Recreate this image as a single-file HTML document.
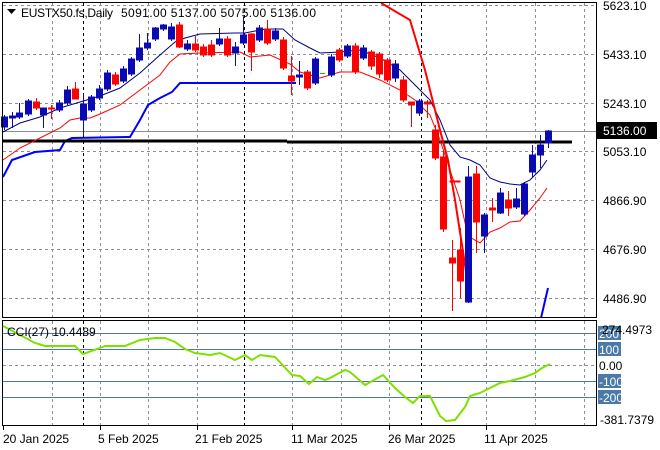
<!DOCTYPE html>
<html><head><meta charset="utf-8"><style>
html,body{margin:0;padding:0;background:#fff;}
svg{display:block;font-family:"Liberation Sans",sans-serif;}
</style></head><body>
<svg width="660" height="450" viewBox="0 0 660 450" xmlns="http://www.w3.org/2000/svg">
<rect width="660" height="450" fill="#fff"/>
<g stroke="#8a9099" stroke-dasharray="3,3" stroke-width="1">
<line x1="3" y1="5.5" x2="596" y2="5.5"/><line x1="3" y1="54.5" x2="596" y2="54.5"/><line x1="3" y1="103.5" x2="596" y2="103.5"/><line x1="3" y1="151.5" x2="596" y2="151.5"/><line x1="3" y1="200.5" x2="596" y2="200.5"/><line x1="3" y1="249.5" x2="596" y2="249.5"/><line x1="3" y1="298.5" x2="596" y2="298.5"/>
<line x1="3" y1="365.5" x2="596" y2="365.5"/>
</g>
<g stroke="#8a9099" stroke-dasharray="3,3">
<path d="M52.5 3V317M100.5 3V317M148.5 3V317M197.5 3V317M292.5 3V317M341.5 3V317M389.5 3V317M486.5 3V317M535.5 3V317M584.5 3V317"/>
<path d="M52.5 321V425M100.5 321V425M148.5 321V425M197.5 321V425M292.5 321V425M341.5 321V425M389.5 321V425M486.5 321V425M535.5 321V425M584.5 321V425"/>
</g>
<g stroke="#000" stroke-dasharray="3,3">
<path d="M83.5 3V317M244.5 3V317M421.5 3V317M83.5 321V425M244.5 321V425M421.5 321V425"/>
</g>
<line x1="3" y1="131.5" x2="596" y2="131.5" stroke="#8a9099"/>
<polyline fill="none" stroke="#0000ff" stroke-width="2" points="3,177 12,160 35,152 60,150 65,141 72,138 130,137 140,120 148,105 160,98 172,92 180,83 296,83"/>
<polyline fill="none" stroke="#0000ff" stroke-width="2" points="541,318 548,288"/>
<path d="M3 141H287M287 142H572" stroke="#000" stroke-width="3"/>
<polyline fill="none" stroke="#000080" stroke-width="1" points="3,132 20,123 40,117 60,108 80,102 100,96 120,88 140,73 160,55 175,42 185,38 200,34 235,33 245,33 265,29 283,29 295,40 310,48 320,53 340,52 360,50 380,58 400,70 420,90 430,100 440,120 450,145 460,157 470,160 480,165 490,178 500,182 510,184 520,185 530,180 540,170 547,160"/>
<polyline fill="none" stroke="#ff0000" stroke-width="1" points="3,160 20,148 40,138 60,128 70,120 80,118 90,118 100,114 120,105 140,90 160,75 170,62 180,54 200,53 240,52 250,57 270,55 290,64 300,72 320,78 340,72 360,72 380,80 400,90 415,100 430,115 440,140 450,170 460,200 468,236 480,243 490,232 500,228 510,222 520,221 530,210 540,198 547,188"/>
<polyline fill="none" stroke="#ff0000" stroke-width="2" points="381,3 410,20 425,70 440,130 448,160 455,200 462,245 467,278"/>
<g>
<g fill="#0a0ab4" stroke="#0a0ab4">
<path d="M4.5 115V130M12.5 112V128M19.5 103V119M28.5 99V116M43.5 108V128M59.5 100V112M67.5 86V105M83.5 94V136M91.5 95V112M99.5 85V100M107.5 70V91M123.5 66V83M131.5 57V76M139.5 34V62M147.5 33V50M155.5 27V41M163.5 24V31M171.5 23V41M187.5 40V51M219.5 28V46M235.5 42V66M243.5 17V45M259.5 25V42M275.5 28V41M299.5 61V85M315.5 57V85M331.5 54V77M347.5 44V58M363.5 45V60M395.5 60V82M419.5 99V116M468.5 166V303M484.5 213V253M500.5 188V214M516.5 188V209M524.5 182V216M532.5 145V178M540.5 135V168M548.5 130V148" fill="none"/>
<rect x="1.5" y="117" width="6" height="10"/><rect x="9.5" y="116" width="6" height="2"/><rect x="16.5" y="113" width="6" height="4"/><rect x="25.5" y="101" width="6" height="13"/><rect x="40.5" y="108" width="6" height="7"/><rect x="56.5" y="103" width="6" height="7"/><rect x="64.5" y="90" width="6" height="13"/><rect x="80.5" y="104" width="6" height="16"/><rect x="88.5" y="97" width="6" height="13"/><rect x="96.5" y="89" width="6" height="9"/><rect x="104.5" y="73" width="6" height="16"/><rect x="120.5" y="69" width="6" height="12"/><rect x="128.5" y="59" width="6" height="15"/><rect x="136.5" y="48" width="6" height="12"/><rect x="144.5" y="43" width="6" height="5"/><rect x="152.5" y="28" width="6" height="11"/><rect x="160.5" y="25" width="6" height="4"/><rect x="168.5" y="27" width="6" height="12"/><rect x="184.5" y="44" width="6" height="5"/><rect x="216.5" y="39" width="6" height="5"/><rect x="232.5" y="47" width="6" height="6"/><rect x="240.5" y="35" width="6" height="8"/><rect x="256.5" y="28" width="6" height="12"/><rect x="272.5" y="31" width="6" height="8"/><rect x="296.5" y="75" width="6" height="2"/><rect x="312.5" y="59" width="6" height="24"/><rect x="328.5" y="57" width="6" height="18"/><rect x="344.5" y="46" width="6" height="10"/><rect x="360.5" y="48" width="6" height="10"/><rect x="392.5" y="64" width="6" height="14"/><rect x="416.5" y="101" width="6" height="12"/><rect x="465.5" y="177" width="6" height="125"/><rect x="481.5" y="215" width="6" height="21"/><rect x="497.5" y="193" width="6" height="20"/><rect x="513.5" y="199" width="6" height="8"/><rect x="521.5" y="184" width="6" height="30"/><rect x="529.5" y="155" width="6" height="17"/><rect x="537.5" y="145" width="6" height="10"/><rect x="545.5" y="131" width="6" height="12"/>
</g>
<g fill="#ff0000" stroke="#ff0000">
<path d="M36.5 98V110M51.5 105V119M75.5 82V99M115.5 72V86M179.5 22V48M195.5 36V52M203.5 44V57M211.5 40V57M227.5 36V57M251.5 33V71M267.5 20V45M283.5 37V70M291.5 56V95M307.5 70V90M339.5 48V62M355.5 43V74M371.5 50V70M379.5 52V78M387.5 58V82M403.5 76V102M411.5 102V127M427.5 100V118M435.5 125V160M443.5 150V232M452.5 240V311M460.5 228V298M476.5 166V253M492.5 198V222M508.5 191V216" fill="none"/>
<rect x="33.5" y="102" width="6" height="6"/><rect x="48.5" y="108" width="6" height="1"/><rect x="72.5" y="89" width="6" height="10"/><rect x="112.5" y="75" width="6" height="9"/><rect x="176.5" y="25" width="6" height="22"/><rect x="192.5" y="44" width="6" height="6"/><rect x="200.5" y="47" width="6" height="8"/><rect x="208.5" y="45" width="6" height="10"/><rect x="224.5" y="39" width="6" height="16"/><rect x="248.5" y="34" width="6" height="18"/><rect x="264.5" y="29" width="6" height="14"/><rect x="280.5" y="40" width="6" height="28"/><rect x="288.5" y="76" width="6" height="5"/><rect x="304.5" y="72" width="6" height="16"/><rect x="336.5" y="50" width="6" height="10"/><rect x="352.5" y="46" width="6" height="26"/><rect x="368.5" y="52" width="6" height="14"/><rect x="376.5" y="54" width="6" height="20"/><rect x="384.5" y="60" width="6" height="20"/><rect x="400.5" y="80" width="6" height="20"/><rect x="408.5" y="102" width="6" height="3"/><rect x="424.5" y="102" width="6" height="2"/><rect x="432.5" y="130" width="6" height="28"/><rect x="440.5" y="157" width="6" height="72"/><rect x="449.5" y="258" width="6" height="5"/><rect x="457.5" y="250" width="6" height="31"/><rect x="473.5" y="174" width="6" height="48"/><rect x="489.5" y="208" width="6" height="2"/><rect x="505.5" y="200" width="6" height="8"/>
<rect x="450" y="181" width="10" height="1"/>
</g>
<rect x="320" y="73" width="5" height="1" fill="#00c000"/>
</g>
<rect x="2.5" y="2.5" width="594" height="315" fill="none" stroke="#000"/>
<rect x="2.5" y="320.5" width="594" height="105" fill="none" stroke="#000"/>
<path d="M7 9h9l-4.5 5z" fill="#000"/>
<text x="21" y="17" font-size="12" fill="#000" textLength="92" lengthAdjust="spacing">EUSTX50.fs,Daily</text>
<text x="121" y="17" font-size="12" fill="#000" textLength="195" lengthAdjust="spacing">5091.00 5137.00 5075.00 5136.00</text>
<g font-size="12" fill="#000">
<text x="603" y="10">5623.10</text><text x="603" y="59">5433.10</text><text x="603" y="108">5243.10</text><text x="603" y="156">5053.10</text><text x="603" y="205">4866.90</text><text x="603" y="254">4676.90</text><text x="603" y="303">4486.90</text>
</g>
<rect x="597" y="122" width="60" height="17" fill="#000"/>
<text x="603" y="135" font-size="12" fill="#fff">5136.00</text>
<g stroke="#4a7aa8" stroke-width="1">
<path d="M3 333.5H596M3 349.5H596M3 381.5H596M3 397.5H596"/>
</g>
<polyline fill="none" stroke="#7fe000" stroke-width="2" points="3,326 20,335 35,343 45,346 60,346 75,346 83,354 100,348 105,346 125,346 140,340 155,338 165,338 175,342 185,349 195,353 210,355 220,353 235,360 245,355 252,360 260,355 275,357 292,375 300,376 309,384 317,377 325,380 330,378 345,370 350,372 365,385 383,375 395,388 405,397 413,403 420,396 430,396 440,416 446,421 455,420 465,407 470,396 480,393 490,388 500,383 510,381 525,377 535,373 542,368 550,364"/>
<text x="7" y="336" font-size="12" fill="#000">CCI(27) 10.4489</text>
<g font-size="12">
<rect x="598" y="326" width="23" height="14" fill="#4a7aa8"/><rect x="598" y="342" width="23" height="14" fill="#4a7aa8"/><rect x="598" y="374" width="23" height="14" fill="#4a7aa8"/><rect x="598" y="390" width="23" height="14" fill="#4a7aa8"/>
<text x="599" y="338" fill="#fff">200</text><text x="599" y="354" fill="#fff">100</text><text x="599" y="386" fill="#fff">-100</text><text x="599" y="402" fill="#fff">-200</text>
<text x="602" y="334" fill="#000">274.4973</text><text x="599" y="370" fill="#000">0.00</text><text x="600" y="424" fill="#000">-381.7379</text>
</g>
<g stroke="#000"><path d="M3.5 426V430M100.5 426V430M197.5 426V430M292.5 426V430M389.5 426V430M486.5 426V430"/></g>
<g font-size="12" fill="#000">
<text x="3" y="443">20 Jan 2025</text><text x="98" y="443">5 Feb 2025</text><text x="195" y="443">21 Feb 2025</text><text x="291" y="443">11 Mar 2025</text><text x="388" y="443">26 Mar 2025</text><text x="484" y="443">11 Apr 2025</text>
</g>
</svg>
</body></html>
